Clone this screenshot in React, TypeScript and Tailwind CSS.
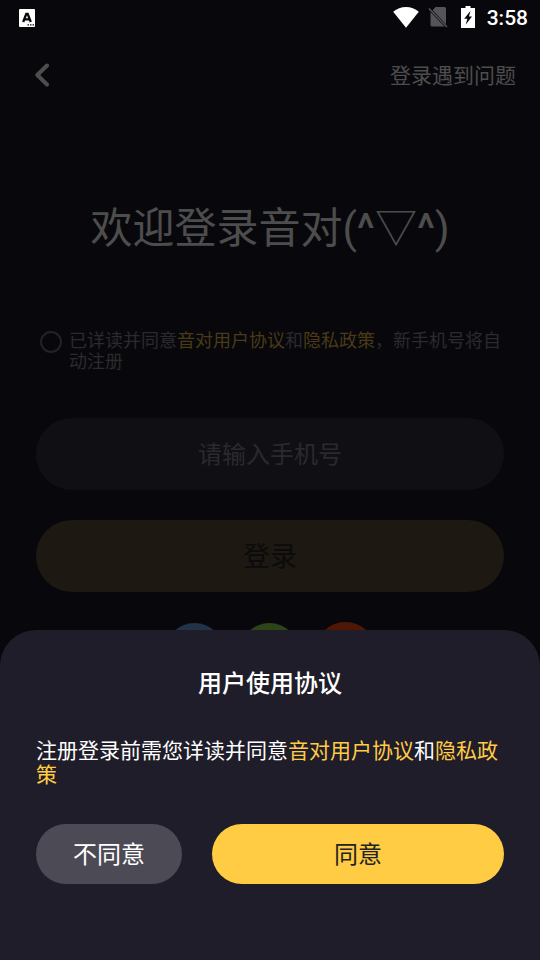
import { ReactNode } from 'react';

function StatusBar() {
  return (
    <div className="h-9 shrink-0 flex items-center justify-between pl-[19px] pr-3 text-white">
      <svg width="16" height="18" viewBox="0 0 16 18">
        <rect width="16" height="18" rx="1" fill="#fff" />
        <path d="M4.2 13 7.3 4.8h1.4L11.8 13M5.4 10.3h5.2" stroke="#08080c" strokeWidth="2.3" fill="none" />
        <path d="M8.5 15.9h1.5M11 15.9h1.5M13.5 15.9h1.5" stroke="#08080c" strokeWidth="1.4" />
      </svg>

      <div className="flex items-center">
        {/* Wifi */}
        <svg width="26" height="21" viewBox="0 0 26 21" className="mr-[9px] mb-[2px]">
          <path d="M13 20.7.2 4.7C3.8 1.7 8.2 0 13 0s9.2 1.7 12.800 4.700z" fill="#fff" />
        </svg>
        {/* No SIM */}
        <svg width="20" height="21" viewBox="0 0 20 21" className="mr-[13px] mb-px">
          <path d="M7.500 0h9A1.500 1.500 0 0 1 18 1.500v15.700L4.600 3.200z" fill="#555558" />
          <path d="M2.500 5v13A1.500 1.500 0 0 0 4 19.500h12.500z" fill="#555558" />
          <path d="M.9 1.500 19 20" stroke="#555558" strokeWidth="1.500" />
        </svg>
        {/* Battery charging */}
        <svg width="14" height="22" viewBox="0 0 14 22" className="mr-3 mb-[2px]">
          <path d="M4.500 0h5v2H14v20H0V2h4.500z" fill="#fff" />
          <path d="M9.600 4.800 3.200 12.800h3.200L4.600 18.800 11 10.400H7.900z" fill="#08080c" />
        </svg>
        <span className="pt-px font-['Roboto'] font-medium text-[21px] leading-none">3:58</span>
      </div>
    </div>
  );
}

function Highlight({ children, className }: { children: ReactNode; className: string }) {
  return <span className={className}>{children}</span>;
}

export default function App() {
  return (
    <div className="relative w-[540px] h-[960px] overflow-hidden bg-[#08080c] flex flex-col font-['Roboto','Noto_Sans_CJK_SC',sans-serif]">
      <StatusBar />

      <header className="h-[78px] shrink-0 flex items-center justify-between pl-[34px] pr-6">
        <svg width="16" height="24" viewBox="0 0 16 24" fill="none">
          <path d="M13 2.500 3.300 12l9.700 9.500" stroke="#4d4d4d" strokeWidth="4" strokeLinecap="round" strokeLinejoin="round" />
        </svg>
        <span className="pt-[2px] text-[21px] leading-6 text-[#4d4d4d]">登录遇到问题</span>
      </header>

      <main className="flex flex-col px-9">
        <h1 className="mt-[85px] text-center text-[42px] leading-[60px] text-[#4d4d4d] whitespace-nowrap">
          欢迎登录音对(<span className="font-medium">^</span>▽<span className="font-medium">^</span>)
        </h1>

        <div className="mt-[71px] pl-1 flex gap-[7px] text-[18px] leading-[21px] text-[#2b2b2d]">
          <span className="mt-px size-[22px] shrink-0 rounded-full border-2 border-[#232326]" />
          <p className="w-[435px]">
            已详读并同意
            <Highlight className="text-[#4a3a16]">音对用户协议</Highlight>和
            <Highlight className="text-[#4a3a16]">隐私政策</Highlight>，新手机号将自动注册
          </p>
        </div>

        <div className="mt-[46px] h-[72px] pt-[2px] rounded-full bg-[#101014] flex items-center justify-center text-2xl text-[#2a2a2e]">
          请输入手机号
        </div>

        <button className="mt-[30px] h-[72px] pt-[2px] rounded-full bg-[#1d1811] text-[27px] text-[#0b0b0c]">
          登录
        </button>

        {/* Third-party logins */}
        <div className="mt-[30px] flex items-center justify-center gap-4">
          <span className="size-[59px] rounded-full bg-[#203347]" />
          <span className="size-[59px] rounded-full bg-[#2c4518]" />
          <span className="size-[61px] rounded-full bg-[#4e1805]" />
        </div>
      </main>

      {/* Agreement sheet */}
      <section className="absolute inset-x-0 bottom-0 h-[330px] rounded-t-[36px] bg-[#1f1d2a] px-9 text-white">
        <h2 className="mt-[36px] text-center text-2xl leading-9 font-medium">用户使用协议</h2>

        <p className="mt-[37px] text-[21px] leading-6">
          注册登录前需您详读并同意
          <Highlight className="text-[#ffcc44]">音对用户协议</Highlight>和
          <Highlight className="text-[#ffcc44]">隐私政策</Highlight>
        </p>

        <div className="mt-[37px] flex gap-[30px] text-2xl">
          <button className="w-[146px] h-[60px] pt-[2px] rounded-full bg-[#4c4a55]">不同意</button>
          <button className="flex-1 h-[60px] pt-[2px] rounded-full bg-[#ffcc44] text-[#222222]">同意</button>
        </div>
      </section>
    </div>
  );
}
